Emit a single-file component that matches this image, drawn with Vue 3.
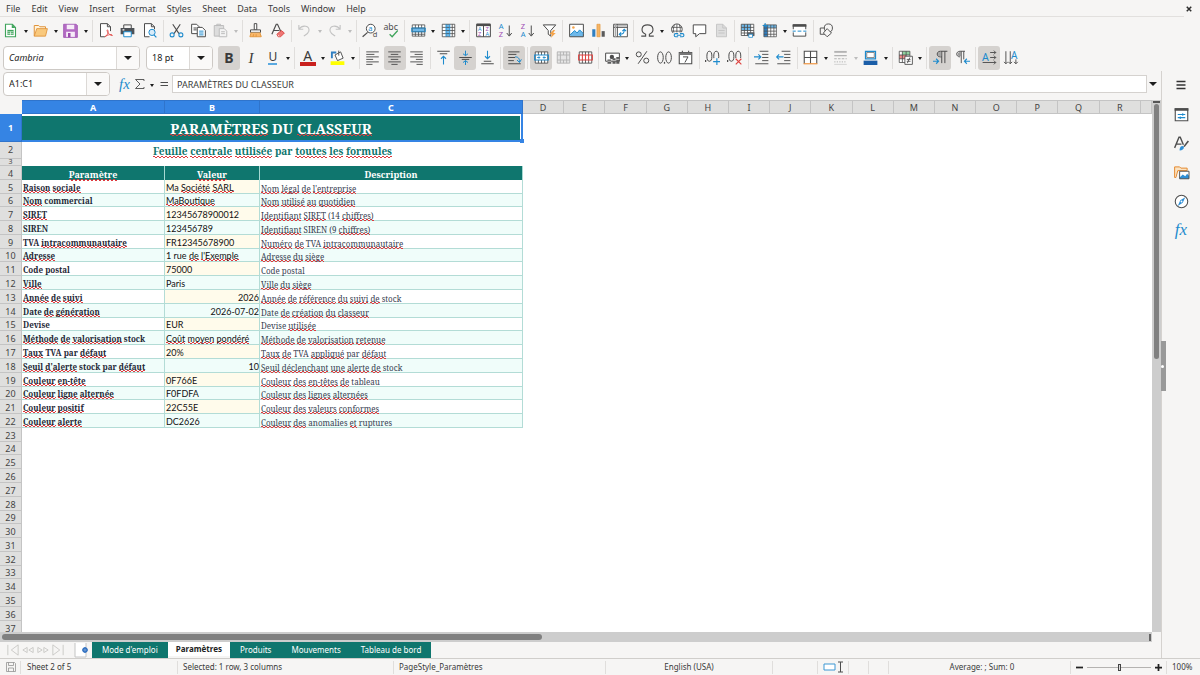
<script setup>
import { ref } from 'vue'

const menus = ['File', 'Edit', 'View', 'Insert', 'Format', 'Styles', 'Sheet', 'Data', 'Tools', 'Window', 'Help']

const K = '#4d4d4d'
const B = '#1e8bcd'
const line = (d, c = K, w = 1.6) => `<path d="${d}" fill="none" stroke="${c}" stroke-width="${w}"/>`
const fill = (d, c) => `<path d="${d}" fill="${c}"/>`
const letter = (t, x, y, s, c, extra = '') => `<text x="${x}" y="${y}" font-size="${s}" fill="${c}" ${extra}>${t}</text>`

const icons = {
  new: fill('M4 2H15L20 7V22H4Z', '#fff') + line('M4 2H15L20 7V22H4Z', '#3fa45b', 1.8) + fill('M14 2L20 8H14Z', '#3fa45b') + fill('M7 11H17V19H7Z', '#3fa45b') + line('M7 14H17M7 17H17M12 14V19', '#fff', 1),
  open: fill('M2 21V4H9L11 6H20V10', '#fff3dc') + line('M2 21V4H9L11 6H20V10', '#e0933a') + fill('M2 21L6 9H23L20 21Z', '#f9c97d') + line('M2 21L6 9H23L20 21Z', '#e0933a', 1.4),
  save: fill('M1 2H21L23 4V23H1Z', '#b46cc4') + fill('M6 2H18V10H6Z', '#f6ecf8') + fill('M5 14H19V23H5Z', '#f6ecf8') + fill('M8 16H12V23H8Z', '#9a4cad') + line('M1 2H21L23 4V23H1Z', '#9a4cad', 1.2),
  pdf: fill('M4 1H15L20 6V22H4Z', '#fff') + line('M20 13V6L15 1H4V22H11M15 1V6H20', K, 1.6) + line('M11 22C17 19 17 11 15 11C13 11 17 20 23 20C22 16 12 21 11 22Z', '#e2504d', 1.5),
  print: line('M6 8V3H18V8', K) + fill('M1 8H23V18H1Z', '#4d5156') + fill('M6 14H18V22H6Z', '#fff') + line('M6 14H18V22H6Z', B, 1.6) + fill('M4 10H7V12H4Z', '#fff'),
  preview: fill('M4 1H15L20 6V22H4Z', '#fff') + line('M20 10V6L15 1H4V22H12M15 1V6H20', K) + '<circle cx="16" cy="15" r="5" fill="#d9ecf9" stroke="#1e8bcd" stroke-width="1.6"/>' + line('M19 19L23 23', B, 2),
  cut: line('M6 2L16 17M18 2L8 17', K, 1.8) + '<circle cx="5" cy="19" r="3.2" fill="none" stroke="#1e8bcd" stroke-width="1.7"/><circle cx="19" cy="19" r="3.2" fill="none" stroke="#1e8bcd" stroke-width="1.7"/>',
  copy: fill('M1 2H9L13 6V17H1Z', '#fff') + line('M1 2H9L13 6V17H1ZM4 8H9M4 11H9', K) + fill('M10 7H18L23 12V22H10Z', '#fff') + line('M10 7H18L23 12V22H10Z', K) + line('M13 13H20M13 16H20M13 19H20', B, 1.5),
  paste: fill('M2 4H16V21H2Z', '#ddd') + line('M2 4H17V21H2ZM6 5V2H12V5', '#bdbdbd') + fill('M10 9H18L22 13V22H10Z', '#f4f4f4') + line('M10 9H18L22 13V22H10ZM13 14H19M13 17H19', '#bdbdbd'),
  clone: fill('M10 1H14V11H10Z', '#fff') + line('M10 1H14V11H10Z', K) + fill('M4 11H20V15H4Z', '#fff') + line('M4 11H20V15H4Z', K) + fill('M5 15H19L22 22H3Z', '#f9b769') + line('M5 15L3 22H21L19 15M8 22L9 18M13 22V18', '#e0933a', 1.4),
  clear: line('M3 18L10 2H12L18 15M6 12H15', K, 1.9) + fill('M11 18L18 12L23 16L17 22Z', '#ee7674') + line('M11 18L18 12L23 16L17 22H13Z', '#d9413e', 1.4),
  undo: line('M3 3V10H10M3 10C9 2 21 4 19 13C18 17 14 19 11 21', '#c3c3c3', 1.8),
  redo: line('M21 3V10H14M21 10C15 2 3 4 5 13C6 17 10 19 13 21', '#c3c3c3', 1.8),
  find: '<circle cx="14" cy="9" r="7" fill="#fff" stroke="#4d4d4d" stroke-width="1.6"/>' + line('M9 15L1 22', K, 2) + letter('a', 10, 13, 12, B) + letter('d', 17, 23, 12, K),
  spell: letter('abc', -1, 11, 14, K) + line('M9 18L13 22L22 12', '#3fa45b', 2),
  row: fill('M2 3H22V21H2Z', '#fff') + fill('M2 8H22V14H2Z', '#6db8ea') + line('M2 3H22V21H2ZM2 8H22M2 14H22M7 3V8M12 3V8M17 3V8M7 14V21M12 14V21M17 14V21M2 18H22', K, 1.3) + line('M1 8H23V14H1Z', B, 1.4),
  col: fill('M2 2H22V22H2Z', '#fff') + fill('M8 2H14V22H8Z', '#6db8ea') + line('M2 2H22V22H2ZM2 7H22M2 12H22M2 17H22M18 2V22', K, 1.3) + line('M8 2V22M14 2V22', B, 1.4),
  sort: fill('M1 2H23V22H1Z', '#fff') + line('M1 2H23V22H1ZM12 4V22', K) + fill('M1 1H23V5H1Z', K) + letter('A', 3, 13, 9, B) + letter('Z', 3, 21, 9, '#a04cb5') + letter('Z', 15, 13, 9, '#a04cb5') + letter('A', 15, 21, 9, B),
  asc: letter('A', 1, 10, 12, B) + letter('Z', 1, 23, 12, '#a04cb5') + line('M18 4V20M14 16L18 21L22 16', K),
  desc: letter('Z', 1, 10, 12, '#a04cb5') + letter('A', 1, 23, 12, B) + line('M18 4V20M14 16L18 21L22 16', K),
  filter: fill('M2 3H22L14 12V19L10 16V12Z', '#fff') + line('M2 3H22L14 12V21L10 18V12Z', K, 1.6) + fill('M18 11L12 18H16L14 24L22 16H18L21 11Z', '#f5a348'),
  image: fill('M1 2H23V22H1Z', '#fff') + fill('M2 18L9 12L13 16L17 11L23 17V22H2Z', '#6db8ea') + line('M1 2H23V22H1Z', K) + line('M2 19L9 12L13 16L17 11L23 17', B) + '<circle cx="7" cy="7" r="2" fill="#f5a348"/>',
  chart: fill('M2 10H7V22H2Z', '#2f7fc2') + fill('M9.500 2H14.500V22H9.500Z', '#f5b566') + fill('M17 13H22V22H17Z', '#5a5a5a') + line('M9.500 2H14.500V22H9.500Z', '#e0933a', 1),
  pivot: fill('M1 2H23V22H1Z', '#fff') + line('M1 2H23V22H1ZM1 7H23M7 2V22', K, 1.5) + line('M2 4.500H22M4 2V22', '#a9a9a9', 2) + line('M11 18C17 18 18 15 18 11M15 13L18 10L21 13M13 15L10 18L13 21', B, 1.7),
  omega: line('M2 21H9V18C0 14 2 3 12 3C22 3 24 14 15 18V21H22', K, 1.8),
  link: '<circle cx="11" cy="10" r="8.500" fill="#fff" stroke="#4d4d4d" stroke-width="1.500"/>' + line('M3 7H19M3 13H19M11 2V18M7 3C5 8 5 13 7 17M15 3C17 8 17 13 15 17', K, 1.3) + '<rect x="5" y="15" width="19" height="8" fill="#f6f5f4"/>' + line('M13 17H9C6 17 6 22 9 22H13M16 17H20C23 17 23 22 20 22H16M11 19.500H18', B, 1.8),
  comment: fill('M2 3H22V17H12L6 22V17H2Z', '#fff') + line('M2 3H22V17H12L6 22V17H2Z', K),
  header: fill('M4 2H14L20 8V22H4Z', '#dedede') + line('M4 2H14L20 8V22H4ZM14 2V8H20M7 12H17M7 16H17', '#c2c2c2', 1.4),
  area: fill('M2 2H22V20H2Z', '#fff') + fill('M2 2H17V12H2Z', '#6db8ea') + line('M2 2H22V20H2ZM2 7H22M2 12H22M2 16H22M7 2V20M12 2V20M17 2V20', K, 1.3) + fill('M11 15H23V21H11Z', '#5a5f65') + fill('M14 18H20V23H14Z', '#fff') + line('M14 18H20V23H14Z', B, 1.2),
  freeze: fill('M3 3H23V22H3Z', '#fff') + fill('M3 3H9V22H3Z', '#2f7fc2') + fill('M9 3H23V8H9Z', '#6db8ea') + line('M3 3H23V22H3ZM3 8H23M3 13H23M3 18H23M9 3V22M14 3V22M19 3V22', K, 1.2) + line('M5 0V7M1 4H9', B, 1.6),
  split: fill('M1 3H23V21H1Z', '#fff') + line('M2 10V3H22V10M2 15V21H22V15', K) + fill('M1 2H23V6H1Z', K) + line('M1 13H6M9 13H15M18 13H23', B, 1.6),
  shapes: fill('M13 2H21V10H13Z', '#fff') + line('M2 8H11V18H2Z', K, 1.5) + '<circle cx="15" cy="8" r="6.500" fill="#f6f5f4" stroke="#4d4d4d" stroke-width="1.500"/>' + fill('M13 9L20 16L13 22L7 16Z', '#f6f5f4') + line('M13 9L20 16L13 22L7 16Z', K, 1.5),
  left: line('M2 3H22M2 7H15M2 11H22M2 15H13M2 19H22M2 23H12', K, 1.5),
  center: line('M2 3H22M6 7H18M2 11H22M6 15H18M2 19H22M7 23H17', K, 1.5),
  right: line('M2 3H22M9 7H22M2 11H22M11 15H22M2 19H22M12 23H22', K, 1.5),
  top: line('M2 2H22M6 6H18', K, 1.6) + line('M12 23V10M8 14L12 10L16 14', B, 1.7),
  middle: line('M2 12H22M6 15H18', K, 1.6) + line('M12 1V9M8 6L12 9L16 6M12 24V17M8 20L12 17L16 20', B, 1.6),
  bottom: line('M6 18H18M2 22H22', K, 1.6) + line('M12 1V14M8 10L12 14L16 10', B, 1.7),
  wrap: line('M2 3H20M2 7H15M2 12H13M2 17H11M2 22H22', K, 1.6) + line('M13 11C18 11 20 13 20 19M16 16L20 20L23 15', B, 1.6),
  merge: fill('M2 3H22V21H2Z', '#fff') + line('M2 3H22V21H2ZM7 3V8M12 3V8M17 3V8M7 16V21M12 16V21M17 16V21', K, 1.4) + line('M1 8H23V16H1Z', B, 1.8) + line('M5 12H10M14 12H19M8 10V14M16 10V14', B, 1.4),
  mergeoff: fill('M2 3H22V21H2Z', '#e6e6e6') + line('M2 3H22V21H2ZM2 8H22M2 16H22M7 3V21M12 3V8M17 3V21M12 16V21', '#b3b3b3', 1.5),
  unmerge: fill('M2 3H22V21H2Z', '#fff') + line('M2 3H22V21H2ZM7 3V8M12 3V8M17 3V8M7 16V21M12 16V21M17 16V21', K, 1.4) + line('M1 8H23V16H1ZM7 8V16M12 8V16M17 8V16', '#dd4340', 1.7),
  money: fill('M1 5H23V18H1Z', '#fff') + line('M1 5H23V18H1Z', K, 1.6) + '<circle cx="11" cy="11" r="3.500" fill="#4d4d4d"/>' + fill('M4 15H10V22H4ZM12 13H17V22H12ZM18 11H23V22H18Z', '#5c5c5c') + line('M4 18H10M12 17H17M18 15H23', '#fff', 1),
  percent: line('M19 2L5 22', K, 1.6) + '<circle cx="6" cy="7" r="4" fill="none" stroke="#4d4d4d" stroke-width="1.600"/><circle cx="18" cy="17" r="4" fill="none" stroke="#4d4d4d" stroke-width="1.600"/>',
  number: '<ellipse cx="5.500" cy="12" rx="4.500" ry="9" fill="none" stroke="#4d4d4d" stroke-width="1.600"/><ellipse cx="18.500" cy="12" rx="4.500" ry="9" fill="none" stroke="#4d4d4d" stroke-width="1.600"/>' + fill('M11 19H13V22H11Z', K),
  date: fill('M2 4H22V22H2Z', '#fff') + line('M2 4H22V22H2ZM7 1V6M17 1V6', K, 1.7) + fill('M2 4H22V8H2Z', '#777') + line('M8 11H16L11 20', K, 1.6),
  adddec: '<ellipse cx="7" cy="10" rx="4" ry="8" fill="none" stroke="#4d4d4d" stroke-width="1.600"/><ellipse cx="18" cy="10" rx="4" ry="8" fill="none" stroke="#4d4d4d" stroke-width="1.600"/>' + fill('M0 16H2V19H0Z', K) + '<rect x="13" y="13" width="11" height="11" fill="#f6f5f4"/>' + line('M19 13V24M13 18.500H24', B, 1.8),
  deldec: '<ellipse cx="7" cy="10" rx="4" ry="8" fill="none" stroke="#4d4d4d" stroke-width="1.600"/><ellipse cx="18" cy="10" rx="4" ry="8" fill="none" stroke="#4d4d4d" stroke-width="1.600"/>' + fill('M0 16H2V19H0Z', K) + '<rect x="13" y="13" width="11" height="11" fill="#f6f5f4"/>' + line('M14 14L23 23M23 14L14 23', '#dd4340', 1.8),
  indent: line('M9 2H23M13 7H23M13 12H23M13 17H23M2 22H23', K, 1.5) + line('M0 11H11M7 7L11 11L7 15', B, 1.7),
  outdent: line('M9 2H23M13 7H23M13 12H23M13 17H23M2 22H23', K, 1.5) + line('M12 11H1M5 7L1 11L5 15', B, 1.7),
  borders: fill('M2 2H22V22H2Z', '#fff') + line('M2 22V2H22V22M12 2V22M2 12H22', K, 1.7) + line('M1 22H23', '#f0953f', 1.9),
  lines: line('M2 3H22', '#b3b3b3', 3) + line('M2 9H22', '#b3b3b3', 2) + line('M2 14H6M8 14H12M14 14H18M20 14H22M2 19H4M6 19H8M10 19H12M14 19H16M18 19H20', '#b3b3b3', 1.6) + line('M2 23H22', '#c9c9c9', 1.2),
  bcolor: fill('M5 2H20V14H5Z', '#fff') + line('M4 2H20V14H4Z', B, 2) + line('M6 4H18V12H6Z', K, 1) + fill('M1 17H23V24H1Z', '#1b5ea8'),
  cond: fill('M2 2H19V20H2Z', '#fff') + fill('M7 2H19V8H7Z', '#8fd19e') + fill('M2 8H13V14H2Z', '#f08a88') + line('M2 2H19V20H2ZM2 8H19M2 14H19M7 2V20M13 2V20', K, 1.3) + fill('M11 10H23V23H11Z', '#fff') + line('M11 10H23V23H11ZM14 15H20M14 18H20M19 12L15 21', K, 1.4),
  ltr: line('M23 2H12C5 2 5 11 12 11H14M14 2V21M19 2V21', K, 1.6) + fill('M13 3H11C7 3 7 10 11 10H13Z', '#a5a5a5') + line('M0 18H9M5 14L9 18L5 22', B, 1.7),
  rtl: line('M16 2H8C1 2 1 11 8 11M10 2V21M14 2V15', K, 1.5) + fill('M10 3H8C3 3 3 10 8 10H10Z', '#9a9a9a') + line('M24 18H15M19 14L15 18L19 22', B, 1.7),
  horiz: letter('A', 0, 17, 17, B) + line('M13 4H22M19 1L22 4L19 7M13 12H22M19 9L22 12L19 15M1 20H22M19 17L22 20L19 23', K, 1.5),
  vert: letter('A', 11, 15, 16, B) + line('M3 2V22M0 19L3 22L6 19M10 2V22M7 19L10 22L13 19M19 15V22M16 19L19 22L22 19', K, 1.5),
  bucket: line('M3 13V4H10', '#2f7fc2', 3) + fill('M8 8L17 3L21 13L12 17Z', '#fff') + line('M8 8L17 3L21 13L12 17ZM14 9V1', K, 1.5) + fill('M1 18H23V24H1Z', '#ffff00'),
  burger: line('M3 5H21M3 12H21M3 19H21', '#333', 2.6),
  props: fill('M1 2H23V22H1Z', '#fff') + line('M2 3H22V22H2Z', K, 1.8) + fill('M1 2H23V6H1Z', K) + line('M6 12H18M6 17H18M14 10V14M10 15V19', B, 1.7),
  styles: line('M1 19L8 2H10L15 14M4 13H12', K, 2.2) + fill('M9 21C10 16 13 15 16 17C16 21 13 23 9 23Z', '#2f8fd6') + line('M16 17L23 8', K, 2.6),
  gallery: fill('M1 20V3H9L11 5H21V9H6Z', '#fbe3c2') + line('M3 20H1V3H9L11 5H21V9H6L3 20', '#e58a2f', 1.6) + fill('M9 10H24V22H9Z', '#fff') + fill('M9 20L14 15L18 18L21 14L24 17V22H9Z', '#2f8fd6') + line('M9 10H24V22H9Z', K, 1.5),
  compass: '<circle cx="12" cy="12" r="10" fill="#fff" stroke="#4d4d4d" stroke-width="1.700"/>' + fill('M18 5L14 14L6 19L10 10Z', '#2f8fd6') + '<circle cx="12" cy="12" r="1.500" fill="#fff"/>',
  sigma: line('M20 6V3H3L12 12L3 21H20V18', K, 1.8),
  equal: line('M5 9H20M5 15H20', K, 2.4),
  disk: line('M3 3H19L21 5V21H3ZM7 3V9H17V3M7 21V14H17V21', '#8d8d8d', 1.5),
}

const t = (icon, title, o = {}) => ({ icon, title, ...o })
const sep = { sep: true }
const standard = [
  t('new', 'New', { arrow: 1 }), t('open', 'Open', { arrow: 1 }), t('save', 'Save', { arrow: 1 }), sep,
  t('pdf', 'Export as PDF'), t('print', 'Print'), t('preview', 'Print preview'), sep,
  t('cut', 'Cut'), t('copy', 'Copy'), t('paste', 'Paste', { arrow: 1, off: 1 }), sep,
  t('clone', 'Clone formatting'), t('clear', 'Clear formatting'), sep,
  t('undo', 'Undo', { arrow: 1, off: 1 }), t('redo', 'Redo', { arrow: 1, off: 1 }), sep,
  t('find', 'Find and replace'), t('spell', 'Spelling'), sep,
  t('row', 'Row', { arrow: 1 }), t('col', 'Column', { arrow: 1 }), sep,
  t('sort', 'Sort'), t('asc', 'Sort ascending'), t('desc', 'Sort descending'), t('filter', 'AutoFilter'), sep,
  t('image', 'Insert image'), t('chart', 'Insert chart'), t('pivot', 'Pivot table'), sep,
  t('omega', 'Special character', { arrow: 1 }), t('link', 'Hyperlink'), t('comment', 'Comment'), t('header', 'Headers and footers', { off: 1 }), sep,
  t('area', 'Print area'), t('freeze', 'Freeze', { arrow: 1 }), t('split', 'Split window'), sep,
  t('shapes', 'Draw functions'),
]
const formatting = [
  { glyph: 'B', title: 'Bold', on: 1, cls: 'bold' }, { glyph: 'I', title: 'Italic', cls: 'italic' },
  { glyph: 'U', title: 'Underline', cls: 'under', arrow: 1 }, sep,
  { glyph: 'A', title: 'Font color', cls: 'fcolor', arrow: 1 }, t('bucket', 'Highlight', { arrow: 1 }), sep,
  t('left', 'Align left'), t('center', 'Center', { on: 1 }), t('right', 'Align right'), sep,
  t('top', 'Top'), t('middle', 'Center vertically', { on: 1 }), t('bottom', 'Bottom'), sep,
  t('wrap', 'Wrap text', { on: 1 }), sep,
  t('merge', 'Merge and center', { on: 1 }), t('mergeoff', 'Merge', { off: 1 }), t('unmerge', 'Unmerge'), sep,
  t('money', 'Currency', { arrow: 1 }), t('percent', 'Percent'), t('number', 'Number'), t('date', 'Date'), sep,
  t('adddec', 'Add decimal place'), t('deldec', 'Delete decimal place'), sep,
  t('indent', 'Increase indent'), t('outdent', 'Decrease indent'), sep,
  t('borders', 'Borders', { arrow: 1 }), t('lines', 'Border style', { arrow: 1, off: 1 }), t('bcolor', 'Border color', { arrow: 1 }), sep,
  t('cond', 'Conditional', { arrow: 1 }), sep,
  t('ltr', 'Left to right', { on: 1 }), t('rtl', 'Right to left'), sep,
  t('horiz', 'Horizontal text', { on: 1 }), t('vert', 'Vertical text'),
]

const sidebar = [t('burger', 'Sidebar settings'), t('props', 'Properties'), t('styles', 'Styles'), t('gallery', 'Gallery'), t('compass', 'Navigator')]

const columns = ['D', 'E', 'F', 'G', 'H', 'I', 'J', 'K', 'L', 'M', 'N', 'O', 'P', 'Q', 'R']

/* A leading "~" marks a word that the spell checker flags. */
const rows = [
  ['~Raison ~sociale', 'Ma ~Société ~SARL', '~Nom ~légal ~de ~l\'entreprise'],
  ['~Nom commercial', '~MaBoutique', '~Nom ~utilisé ~au ~quotidien'],
  ['~SIRET', '12345678900012', '~Identifiant ~SIRET (14 ~chiffres)'],
  ['SIREN', '123456789', '~Identifiant SIREN (9 ~chiffres)'],
  ['TVA ~intracommunautaire', 'FR12345678900', '~Numéro ~de TVA ~intracommunautaire'],
  ['~Adresse', '1 rue ~de ~l\'Exemple', '~Adresse ~du ~siège'],
  ['Code postal', '75000', 'Code postal'],
  ['~Ville', 'Paris', '~Ville ~du ~siège'],
  ['~Année ~de ~suivi', '2026', '~Année ~de ~référence ~du ~suivi ~de stock', true],
  ['Date ~de ~génération', '2026-07-02', 'Date ~de ~création ~du ~classeur', true],
  ['Devise', 'EUR', 'Devise ~utilisée'],
  ['~Méthode ~de ~valorisation stock', '~Coût ~moyen ~pondéré', '~Méthode ~de ~valorisation ~retenue'],
  ['~Taux TVA par ~défaut', '20%', '~Taux ~de TVA ~appliqué par ~défaut'],
  ['~Seuil ~d\'alerte stock par ~défaut', '10', '~Seuil ~déclenchant ~une ~alerte ~de stock', true],
  ['~Couleur ~en-tête', '0F766E', '~Couleur ~des ~en-têtes ~de tableau'],
  ['~Couleur ~ligne ~alternée', 'F0FDFA', '~Couleur ~des ~lignes ~alternées'],
  ['~Couleur ~positif', '22C55E', '~Couleur ~des ~valeurs ~conformes'],
  ['~Couleur ~alerte', 'DC2626', '~Couleur ~des anomalies ~et ruptures'],
]
const words = (s) => s.split(' ').map((w) => ({ bad: w[0] === '~', text: w.replace('~', '') }))
const emptyRows = Array.from({ length: 15 }, (_, i) => i + 23)

const tabs = ['Mode d\'emploi', 'Paramètres', 'Produits', 'Mouvements', 'Tableau de bord']
const activeTab = ref('Paramètres')
const fontName = ref('Cambria')
const fontSize = ref('18 pt')
const cellRef = ref('A1:C1')
const formula = ref('PARAMÈTRES DU CLASSEUR')
const zoom = ref(50)
</script>

<template>
  <div class="app">
    <nav class="menubar">
      <button v-for="m in menus" :key="m" type="button">{{ m }}</button>
      <button type="button" class="close" aria-label="Close">
        <svg viewBox="0 0 8 8"><path d="M1 1L7 7M7 1L1 7" stroke="#2e2e2e" stroke-width="2" /></svg>
      </button>
    </nav>

    <div class="toolbar standard">
      <template v-for="(b, i) in standard" :key="i">
        <span v-if="b.sep" class="sep"></span>
        <template v-else>
          <button type="button" class="tool" :aria-label="b.title"><svg viewBox="0 0 24 24" v-html="icons[b.icon]"></svg></button>
          <button v-if="b.arrow" type="button" class="arrow" :class="{ off: b.off }" :aria-label="b.title + ' options'"></button>
        </template>
      </template>
    </div>

    <div class="format-row">
      <div class="combo font-name">
        <input v-model="fontName" aria-label="Font name" spellcheck="false" />
        <button type="button" aria-label="Font list"></button>
      </div>
      <div class="combo font-size">
        <input v-model="fontSize" aria-label="Font size" spellcheck="false" />
        <button type="button" aria-label="Size list"></button>
      </div>
      <div class="toolbar formatting">
        <template v-for="(b, i) in formatting" :key="i">
          <span v-if="b.sep" class="sep"></span>
          <template v-else>
            <button type="button" class="tool" :class="{ on: b.on }" :aria-label="b.title">
              <svg v-if="b.icon" viewBox="0 0 24 24" v-html="icons[b.icon]"></svg>
              <span v-else class="glyph" :class="b.cls">{{ b.glyph }}</span>
            </button>
            <button v-if="b.arrow" type="button" class="arrow" :class="{ off: b.off }" :aria-label="b.title + ' options'"></button>
          </template>
        </template>
      </div>
    </div>

    <div class="body">
      <main class="work">
        <div class="formula-bar">
          <div class="combo name-box">
            <input v-model="cellRef" aria-label="Name box" spellcheck="false" />
            <button type="button" aria-label="Named ranges"></button>
          </div>
          <button type="button" class="fx" aria-label="Function wizard">fx</button>
          <button type="button" class="tool small" aria-label="Sum"><svg viewBox="0 0 24 24" v-html="icons.sigma"></svg></button>
          <button type="button" class="arrow" aria-label="Sum options"></button>
          <button type="button" class="tool small" aria-label="Formula"><svg viewBox="0 0 24 24" v-html="icons.equal"></svg></button>
          <input v-model="formula" class="formula" aria-label="Formula input" spellcheck="false" />
          <button type="button" class="arrow wide" aria-label="Expand formula bar"></button>
        </div>

        <div class="sheet-area">
          <div class="pane">
            <table class="sheet">
              <colgroup>
                <col class="c-head" /><col class="c-a" /><col class="c-b" /><col class="c-c" />
                <col v-for="c in columns" :key="c" /><col class="c-last" />
              </colgroup>
              <thead>
                <tr>
                  <th class="corner"></th>
                  <th v-for="c in ['A', 'B', 'C']" :key="c" class="sel">{{ c }}</th>
                  <th v-for="c in columns" :key="c">{{ c }}</th>
                  <th></th>
                </tr>
              </thead>
              <tbody>
                <tr class="r1">
                  <th class="sel">1</th>
                  <td colspan="3" class="title">
                    <div class="cursor"><span class="bad">PARAMÈTRES</span> DU <span class="bad">CLASSEUR</span></div>
                    <i class="handle"></i>
                  </td>
                  <td colspan="16"></td>
                </tr>
                <tr class="r2">
                  <th>2</th>
                  <td colspan="3" class="subtitle">
                    <span class="bad">Feuille</span> <span class="bad">centrale</span> <span class="bad">utilisée</span> par
                    <span class="bad">toutes</span> <span class="bad">les</span> <span class="bad">formules</span>
                  </td>
                  <td colspan="16"></td>
                </tr>
                <tr class="r3"><th>3</th><td colspan="19"></td></tr>
                <tr class="heads">
                  <th>4</th>
                  <td><span class="bad">Paramètre</span></td>
                  <td><span class="bad">Valeur</span></td>
                  <td>Description</td>
                  <td colspan="16"></td>
                </tr>
                <tr v-for="(r, i) in rows" :key="i" class="data" :class="{ alt: i % 2 }">
                  <th>{{ i + 5 }}</th>
                  <td class="name"><template v-for="(w, j) in words(r[0])" :key="j"><span :class="{ bad: w.bad }">{{ w.text }}</span>{{ ' ' }}</template></td>
                  <td class="value" :class="{ num: r[3] }"><template v-for="(w, j) in words(r[1])" :key="j"><span :class="{ bad: w.bad }">{{ w.text }}</span>{{ ' ' }}</template></td>
                  <td class="desc"><template v-for="(w, j) in words(r[2])" :key="j"><span :class="{ bad: w.bad }">{{ w.text }}</span>{{ ' ' }}</template></td>
                  <td colspan="16"></td>
                </tr>
                <tr v-for="n in emptyRows" :key="n"><th>{{ n }}</th><td colspan="19"></td></tr>
              </tbody>
            </table>
          </div>
          <div class="vscroll"><i class="split-mark"></i><div class="vthumb"></div></div>
        </div>
        <div class="hscroll"><div class="hthumb"></div><i></i></div>

        <div class="tabs">
          <div class="tab-nav">
            <button type="button" aria-label="First sheet"><svg viewBox="0 0 14 14"><path d="M1 1V13M13 1L5 7L13 13Z" /></svg></button>
            <button type="button" aria-label="Previous sheet"><svg viewBox="0 0 14 14"><path d="M6 4L1 7L6 10ZM13 4L8 7L13 10Z" /></svg></button>
            <button type="button" aria-label="Next sheet"><svg viewBox="0 0 14 14"><path d="M1 4L6 7L1 10ZM8 4L13 7L8 10Z" /></svg></button>
            <button type="button" aria-label="Last sheet"><svg viewBox="0 0 14 14"><path d="M13 1V13M1 1L9 7L1 13Z" /></svg></button>
          </div>
          <button type="button" class="add" aria-label="Add sheet">
            <svg viewBox="0 0 12 15"><path d="M0 0V14H11V0" fill="#fff" stroke="#c4c4c4" /><circle cx="10" cy="7" r="2" fill="#fff" stroke="#2f6fc0" stroke-width="1.3" /><path d="M10 4V10M7 7H13" stroke="#2f6fc0" /></svg>
          </button>
          <button v-for="s in tabs" :key="s" type="button" class="tab" :class="{ active: s === activeTab }" @click="activeTab = s">{{ s }}</button>
        </div>
      </main>

      <aside class="sidebar">
        <button v-for="s in sidebar" :key="s.icon" type="button" class="side" :aria-label="s.title"><svg viewBox="0 0 24 24" v-html="icons[s.icon]"></svg></button>
        <button type="button" class="side fx" aria-label="Functions">fx</button>
        <div class="grip"><i></i></div>
      </aside>
    </div>

    <footer class="status">
      <span class="disk"><svg viewBox="0 0 24 24" v-html="icons.disk"></svg></span>
      <span class="count">Sheet 2 of 5</span>
      <span class="selected">Selected: 1 row, 3 columns</span>
      <span class="style">PageStyle_Paramètres</span>
      <span class="lang">English (USA)</span>
      <span class="gap"></span>
      <span class="mode">
        <svg viewBox="0 0 22 12"><path d="M1 3H12V9H1Z" fill="#fff" stroke="#3d97d3" /><path d="M15 1H20M15 11H20M17.500 1V11" fill="none" stroke="#4d4d4d" /></svg>
      </span>
      <span class="tick"></span><span class="tick"></span>
      <span class="sum">Average: ; Sum: 0</span>
      <span class="zoom">
        <button type="button" aria-label="Zoom out"><svg viewBox="0 0 8 8"><path d="M0 4H8" stroke="#222" stroke-width="2" /></svg></button>
        <input v-model="zoom" type="range" min="0" max="100" aria-label="Zoom" />
        <button type="button" aria-label="Zoom in"><svg viewBox="0 0 8 8"><path d="M0 4H8M4 0V8" stroke="#222" stroke-width="2" /></svg></button>
      </span>
      <span class="pct">100%</span>
    </footer>
  </div>
</template>

<style>
body {
  background: #f6f5f4;
}
</style>

<style scoped>
* {
  box-sizing: border-box;
}
.app {
  display: flex;
  flex-direction: column;
  height: 100vh;
  overflow: hidden;
  background: #f6f5f4;
  color: #3a3a3a;
  font-family: "Noto Sans", "Open Sans", sans-serif;
  font-size: 9px;
  line-height: 12px;
}
button,
input {
  margin: 0;
  padding: 0;
  border: 0;
  background: none;
  color: inherit;
  font: inherit;
}
svg {
  display: block;
  overflow: visible;
}
.menubar {
  display: flex;
  flex: none;
  align-items: center;
  gap: 11px;
  height: 17px;
  margin-right: 16px;
  padding: 2px 0 0 6px;
  border-bottom: 1px solid #e2e0de;
}
.close {
  margin: 0 -8px 0 auto;
}
.close svg {
  width: 6px;
  height: 6px;
}
.toolbar {
  display: flex;
  flex: 1;
  align-items: center;
}
.standard {
  flex: none;
  max-width: 838px;
  height: 27px;
}
.formatting {
  max-width: 804px;
}
.tool {
  display: flex;
  flex: 0 1 22px;
  align-items: center;
  justify-content: center;
  height: 24px;
  border-radius: 3px;
}
.tool.on {
  background: #d5d2cf;
}
.tool svg {
  width: 15px;
  height: 15px;
}
.tool.small svg {
  width: 12px;
  height: 12px;
}
.arrow {
  flex: 0 1 8px;
  height: 22px;
}
.arrow::after,
.combo button::after {
  content: "";
  display: block;
  width: 0;
  margin: 2px auto 0;
  border: 2px solid transparent;
  border-top: 3px solid #1d1d1d;
  border-bottom: 0;
}
.arrow.off::after {
  border-top-color: #bdbdbd;
}
.arrow.wide {
  flex: none;
  width: 12px;
}
.arrow.wide::after,
.combo button::after {
  margin-top: 0;
  border-width: 4px 4px 0;
}
.sep {
  flex: 0 1 5px;
  height: 22px;
  background: linear-gradient(#e0dedc, #e0dedc) center / 1px 100% no-repeat;
}
.glyph {
  font-size: 14px;
  line-height: 16px;
}
.bold {
  font-weight: 700;
}
.italic {
  font-family: "Liberation Serif", serif;
  font-size: 15px;
  font-style: italic;
}
.under {
  font-size: 12px;
  line-height: 12px;
  border-bottom: 2px solid #5aa9e0;
}
.fcolor {
  width: 16px;
  line-height: 12px;
  text-align: center;
  border-bottom: 4px solid #c9211e;
}
.format-row {
  display: flex;
  flex: none;
  align-items: center;
  height: 27px;
  padding-left: 3px;
}
.combo {
  display: flex;
  flex: none;
  height: 24px;
  border: 1px solid #cdc9c5;
  border-radius: 4px;
  background: #fff;
}
.combo input {
  flex: 1;
  min-width: 0;
  padding-left: 5px;
  font-size: 9px;
  color: #222;
}
.combo button {
  width: 23px;
  border-left: 1px solid #dcd9d6;
  border-radius: 0 3px 3px 0;
  background: #faf9f8;
}
.font-name {
  width: 137px;
  margin-right: 6px;
}
.font-name input {
  font-style: italic;
}
.font-size {
  width: 67px;
  margin-right: 5px;
}
.body {
  display: flex;
  flex: 1;
  min-height: 0;
}
.work {
  display: flex;
  flex: 1;
  flex-direction: column;
  min-width: 0;
}
.formula-bar {
  display: flex;
  flex: none;
  align-items: center;
  height: 29px;
  padding: 0 2px 3px 3px;
}
.name-box {
  width: 107px;
}
.fx {
  color: #1e8bcd;
  font-family: "Liberation Serif", serif;
  font-size: 15px;
  font-style: italic;
}
.formula-bar .fx {
  width: 15px;
  margin-left: 7px;
}
.formula-bar .small {
  flex-basis: 16px;
}
.formula {
  flex: 1;
  min-width: 0;
  height: 18px;
  padding-left: 4px;
  border: 1px solid #d5d2cf;
  background: #fff;
}
.sheet-area {
  display: flex;
  flex: 1;
  min-height: 0;
}
.pane {
  flex: 1;
  min-width: 0;
  overflow: hidden;
  background: #fff;
}
.sheet {
  width: 100%;
  height: calc(100% + 3px);
  table-layout: fixed;
  border-collapse: separate;
  border-spacing: 0;
}
.c-head {
  width: 22px;
}
.c-a {
  width: 143px;
}
.c-b {
  width: 95px;
}
.c-c {
  width: 263px;
}
.c-last {
  width: 11px;
}
th,
td {
  padding: 0;
  line-height: 10px;
  vertical-align: bottom;
  white-space: nowrap;
}
th {
  border-right: 1px solid #c4c4c4;
  border-bottom: 1px solid #c4c4c4;
  background: #dfdfde;
  color: #444;
  font-weight: 400;
}
thead th {
  height: 14px;
  border-top: 1px solid #c4c4c4;
}
th.corner {
  border-color: #f6f5f4;
  background: #f6f5f4;
}
th.sel {
  border-color: #2f74cc;
  background: #3584e4;
  color: #fff;
  font-weight: 700;
}
.r1 th,
.r1 td {
  height: 28px;
  vertical-align: middle;
}
.r2 th,
.r2 td {
  height: 17px;
  vertical-align: middle;
}
.r3 th,
.r3 td {
  height: 7px;
}
.r3 th {
  font-size: 7px;
  line-height: 6px;
}
.bad {
  background-image: linear-gradient(90deg, #e0393e 50%, transparent 50%), linear-gradient(90deg, transparent 50%, #e0393e 50%);
  background-position: 0 calc(100% - 1px), 0 100%;
  background-repeat: repeat-x;
  background-size: 4px 1px;
}
.title .bad {
  background-position: 0 calc(100% - 3px), 0 calc(100% - 2px);
}
.title,
.subtitle,
.heads td,
.name,
.desc {
  font-family: "Noto Serif", "DejaVu Serif Condensed", "Liberation Serif", serif;
}
.title {
  position: relative;
  padding: 1px 0 0;
  border-right: 2px solid #3584e4;
  border-bottom: 2px solid #3584e4;
  background: #fff;
  color: #fff;
  text-align: center;
  font-size: 14px;
  font-weight: 700;
}
.cursor {
  height: 24px;
  margin-right: 1px;
  background: #0f766e;
  line-height: 26px;
}
.handle {
  position: absolute;
  right: -3px;
  bottom: -3px;
  width: 4px;
  height: 4px;
  background: #3584e4;
}
.subtitle {
  color: #0f766e;
  text-align: center;
  font-size: 10px;
  font-weight: 700;
}
.heads td:not(:last-child) {
  border-right: 1px solid #a7d9d2;
  background: #0f766e;
  color: #fff;
  text-align: center;
  font-size: 9px;
  font-weight: 700;
}
.data td:not(:last-child) {
  padding-left: 1px;
  border-right: 1px solid #b3dcd6;
  border-bottom: 1px solid #b3dcd6;
}
.alt td:not(:last-child) {
  background: #f0fdfa;
}
.name {
  color: #1f2937;
  font-size: 8px;
  font-weight: 700;
}
.data:not(.alt) .value {
  background: #fffbeb;
}
.value {
  color: #111;
  font-family: Lato, sans-serif;
  font-size: 9px;
}
.num {
  text-align: right;
}
.data .desc {
  color: #374151;
  font-size: 8px;
  line-height: 8px;
}
.vscroll {
  display: flex;
  flex: none;
  flex-direction: column;
  align-items: center;
  width: 9px;
  background: #cdcdcd;
}
.split-mark {
  width: 7px;
  height: 2px;
  margin: 1px 0;
  background: #555;
}
.vthumb {
  width: 5px;
  height: 48%;
  border-radius: 3px;
  background: #808080;
}
.hscroll {
  display: flex;
  flex: none;
  align-items: center;
  justify-content: space-between;
  height: 10px;
  margin-right: 9px;
  padding: 0 1px 0 2px;
  background: #cdcdcd;
}
.hthumb {
  width: 47%;
  height: 6px;
  border-radius: 3px;
  background: #808080;
}
.hscroll i {
  width: 2px;
  height: 7px;
  background: #666;
}
.tabs {
  display: flex;
  flex: none;
  height: 16px;
  font-size: 8px;
}
.tab-nav {
  display: flex;
  align-items: center;
  gap: 1px;
  width: 75px;
  padding-left: 6px;
}
.tab-nav svg {
  width: 14px;
  height: 12px;
  fill: none;
  stroke: #c6c4c2;
}
.add {
  width: 17px;
}
.add svg {
  width: 12px;
  height: 15px;
}
.tab {
  padding: 0 10px;
  background: #0f766e;
  color: #fff;
}
.tab.active {
  height: 14px;
  padding: 0 8px;
  background: #fff;
  color: #222;
  font-weight: 700;
}
.sidebar {
  position: relative;
  display: flex;
  flex: none;
  flex-direction: column;
  align-items: center;
  gap: 13px;
  width: 39px;
  padding-top: 6px;
  border-left: 1px solid #d5d2cf;
}
.side {
  display: flex;
  align-items: center;
  justify-content: center;
  width: 22px;
  height: 16px;
}
.side svg {
  width: 15px;
  height: 15px;
}
.side:first-child svg {
  width: 12px;
  height: 12px;
}
.side.fx {
  font-size: 17px;
}
.grip {
  position: absolute;
  top: 46%;
  left: -1px;
  display: flex;
  align-items: center;
  width: 5px;
  height: 50px;
  background: #999;
}
.grip i {
  width: 3px;
  height: 3px;
  border-radius: 50%;
  background: #fff;
}
.status {
  display: flex;
  flex: none;
  align-items: center;
  height: 17px;
  border-top: 1px solid #d0cecb;
  font-size: 8px;
}
.status > span {
  display: flex;
  align-items: center;
  flex: none;
  height: 13px;
  padding-left: 5px;
  border-right: 1px solid #e0dedc;
}
.status .disk {
  width: 21px;
}
.disk svg {
  width: 12px;
  height: 12px;
}
.status .count {
  width: 157px;
  padding-left: 6px;
}
.status .selected {
  width: 216px;
}
.status .style {
  flex: 1;
}
.status .lang {
  width: 167px;
  justify-content: center;
  padding: 0;
}
.status .gap {
  width: 45px;
}
.status .mode {
  width: 31px;
}
.mode svg {
  width: 22px;
  height: 12px;
}
.status .tick {
  width: 20px;
}
.status .sum {
  width: 182px;
  justify-content: center;
}
.status .zoom {
  gap: 4px;
  width: 96px;
  padding-right: 4px;
}
.zoom svg {
  width: 7px;
  height: 7px;
}
.zoom input {
  flex: 1;
  min-width: 0;
  height: 8px;
  appearance: none;
  background: linear-gradient(#b5b3b1, #b5b3b1) center / 100% 1px no-repeat;
}
.zoom input::-webkit-slider-thumb {
  width: 3px;
  height: 7px;
  appearance: none;
  border: 1px solid #444;
  background: #ddd;
}
.status .pct {
  width: 33px;
  border: 0;
}
</style>
